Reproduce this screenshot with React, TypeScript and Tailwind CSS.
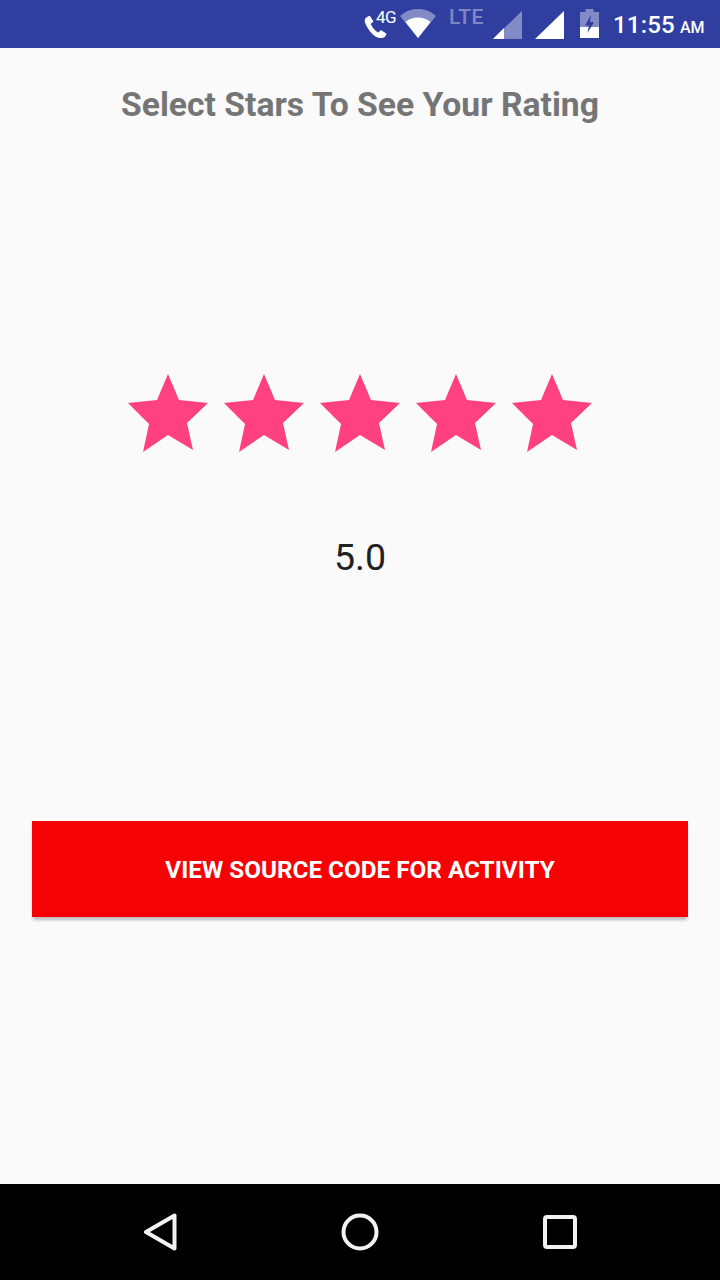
const font = { fontFamily: "Roboto, 'Liberation Sans', sans-serif" };

function Star() {
  return (
    <svg width="80" height="78" viewBox="0 0 80 78" className="shrink-0">
      <polygon
        points="40,0 51,26 80,29 59,49 65,76 40,61 15,78 21,50 0,29 29,26"
        fill="#ff4081"
      />
    </svg>
  );
}

function StatusBar() {
  return (
    <div className="h-12 shrink-0 bg-[#303f9f] flex items-start text-white">
      {/* phone + 4G */}
      <div className="ml-[363px] w-[31px] h-12 relative shrink-0">
        <svg width="25" height="25" viewBox="0 0 24 24" className="absolute left-0 top-[14px]">
          <path
            d="M6.6 1.6c-1.2.2-3.2 1.400-4.400 2.600-1.200 1.500-.4 4.600 1.600 8 2.600 4.600 6.600 9 10.400 10.400 2.600.9 5.200.6 6.600-.6 1-1 1.600-2 1.800-3l-5.400-3.600-2.400 2.400c-2.200-.8-6-4.800-7.400-8.200l2.600-2.400z"
            fill="#fff"
          />
        </svg>
        <span className="absolute left-[13px] top-[7px] text-[17px] leading-[20px] tracking-[-0.5px]">4G</span>
      </div>
      <svg width="36" height="30" viewBox="0 0 36 30" className="ml-[6px] mt-[9px] shrink-0">
        <path d="M0 7C5 2.500 11 0 18 0s13 2.500 18 7L18 29z" fill="#fff" fillOpacity="0.4" />
        <path d="M5.500 13C9 10 13 8.500 18 8.500s9 1.500 12.500 4.500L18 29z" fill="#fff" />
      </svg>
      <span className="ml-[13px] mt-[5px] w-[36px] text-[21px] leading-6 font-medium tracking-[0.4px] text-white/40 shrink-0">
        LTE
      </span>
      <svg width="29" height="28" viewBox="0 0 29 28" className="ml-[8px] mt-[11px] shrink-0">
        <path d="M0 28L29 0v28z" fill="#fff" fillOpacity="0.4" />
        <path d="M0 28l11-11v11z" fill="#fff" />
      </svg>
      <svg width="29" height="28" viewBox="0 0 29 28" className="ml-[13px] mt-[11px] shrink-0">
        <path d="M0 28L29 0v28z" fill="#fff" />
      </svg>
      <svg width="19" height="29" viewBox="0 0 19 29" className="ml-[16px] mt-[9px] shrink-0">
        <path d="M5.500 0h8v3H19v26H0V3h5.500z" fill="#fff" fillOpacity="0.4" />
        <path d="M0 18h19v11H0z" fill="#fff" />
        <path d="M11 6L5 16.500h4L7.500 24 14 13h-4z" fill="#303f9f" />
      </svg>
      <span className="ml-[14px] mt-[11px] text-[24px] leading-[28px] font-medium tracking-[0.2px] shrink-0">11:55</span>
      <span className="ml-[5px] mt-[17px] text-[16px] leading-[22px] font-medium shrink-0">AM</span>
    </div>
  );
}

function NavBar() {
  return (
    <div className="h-24 shrink-0 bg-black flex items-center pl-[143px] pb-[1px]">
      <svg width="36" height="38" viewBox="0 0 36 38" className="shrink-0">
        <path
          d="M31.500 2.500v33L3 19z"
          fill="none"
          stroke="#f2f2f2"
          strokeWidth="4"
          strokeLinejoin="round"
        />
      </svg>
      <svg width="38" height="38" viewBox="0 0 38 38" className="ml-[162px] shrink-0">
        <circle cx="19" cy="19" r="16.500" fill="none" stroke="#f2f2f2" strokeWidth="4" />
      </svg>
      <svg width="34" height="34" viewBox="0 0 34 34" className="ml-[164px] shrink-0">
        <rect x="2" y="2" width="30" height="30" rx="2" fill="none" stroke="#f2f2f2" strokeWidth="4" />
      </svg>
    </div>
  );
}

export default function App() {
  return (
    <div className="w-[720px] h-[1280px] flex flex-col overflow-hidden bg-[#fafafa]" style={font}>
      <StatusBar />

      <div className="flex-1 flex flex-col items-center px-8">
        <h1 className="mt-[38px] text-[33.7px] leading-[38px] font-bold text-[#757575] whitespace-nowrap">
          Select Stars To See Your Rating
        </h1>

        <div className="mt-[250px] flex gap-4">
          <Star />
          <Star />
          <Star />
          <Star />
          <Star />
        </div>

        <p className="mt-[84px] text-[37.5px] leading-[42px] text-[#212121]">5.0</p>

        <button className="mt-[243px] w-full h-24 pt-[2px] bg-[#f60205] text-white text-[24.3px] font-bold shadow-[0_4px_3px_-1px_rgba(0,0,0,0.25)]">
          VIEW SOURCE CODE FOR ACTIVITY
        </button>
      </div>

      <NavBar />
    </div>
  );
}
